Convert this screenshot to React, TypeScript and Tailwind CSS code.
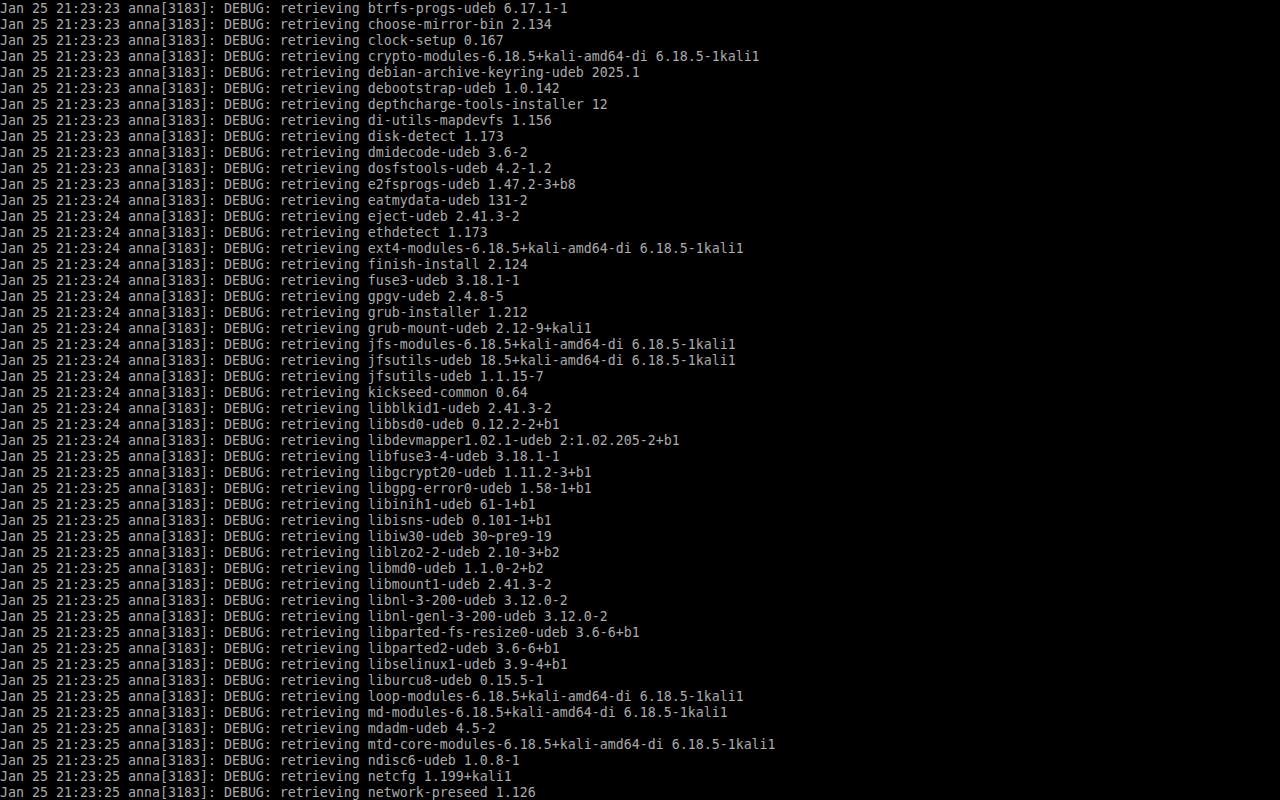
const stamps: [string, string][] = [
  ["23", "btrfs-progs-udeb 6.17.1-1"],
  ["23", "choose-mirror-bin 2.134"],
  ["23", "clock-setup 0.167"],
  ["23", "crypto-modules-6.18.5+kali-amd64-di 6.18.5-1kali1"],
  ["23", "debian-archive-keyring-udeb 2025.1"],
  ["23", "debootstrap-udeb 1.0.142"],
  ["23", "depthcharge-tools-installer 12"],
  ["23", "di-utils-mapdevfs 1.156"],
  ["23", "disk-detect 1.173"],
  ["23", "dmidecode-udeb 3.6-2"],
  ["23", "dosfstools-udeb 4.2-1.2"],
  ["23", "e2fsprogs-udeb 1.47.2-3+b8"],
  ["24", "eatmydata-udeb 131-2"],
  ["24", "eject-udeb 2.41.3-2"],
  ["24", "ethdetect 1.173"],
  ["24", "ext4-modules-6.18.5+kali-amd64-di 6.18.5-1kali1"],
  ["24", "finish-install 2.124"],
  ["24", "fuse3-udeb 3.18.1-1"],
  ["24", "gpgv-udeb 2.4.8-5"],
  ["24", "grub-installer 1.212"],
  ["24", "grub-mount-udeb 2.12-9+kali1"],
  ["24", "jfs-modules-6.18.5+kali-amd64-di 6.18.5-1kali1"],
  ["24", "jfsutils-udeb 18.5+kali-amd64-di 6.18.5-1kali1"],
  ["24", "jfsutils-udeb 1.1.15-7"],
  ["24", "kickseed-common 0.64"],
  ["24", "libblkid1-udeb 2.41.3-2"],
  ["24", "libbsd0-udeb 0.12.2-2+b1"],
  ["24", "libdevmapper1.02.1-udeb 2:1.02.205-2+b1"],
  ["25", "libfuse3-4-udeb 3.18.1-1"],
  ["25", "libgcrypt20-udeb 1.11.2-3+b1"],
  ["25", "libgpg-error0-udeb 1.58-1+b1"],
  ["25", "libinih1-udeb 61-1+b1"],
  ["25", "libisns-udeb 0.101-1+b1"],
  ["25", "libiw30-udeb 30~pre9-19"],
  ["25", "liblzo2-2-udeb 2.10-3+b2"],
  ["25", "libmd0-udeb 1.1.0-2+b2"],
  ["25", "libmount1-udeb 2.41.3-2"],
  ["25", "libnl-3-200-udeb 3.12.0-2"],
  ["25", "libnl-genl-3-200-udeb 3.12.0-2"],
  ["25", "libparted-fs-resize0-udeb 3.6-6+b1"],
  ["25", "libparted2-udeb 3.6-6+b1"],
  ["25", "libselinux1-udeb 3.9-4+b1"],
  ["25", "liburcu8-udeb 0.15.5-1"],
  ["25", "loop-modules-6.18.5+kali-amd64-di 6.18.5-1kali1"],
  ["25", "md-modules-6.18.5+kali-amd64-di 6.18.5-1kali1"],
  ["25", "mdadm-udeb 4.5-2"],
  ["25", "mtd-core-modules-6.18.5+kali-amd64-di 6.18.5-1kali1"],
  ["25", "ndisc6-udeb 1.0.8-1"],
  ["25", "netcfg 1.199+kali1"],
  ["25", "network-preseed 1.126"],
];

const App = () => {
  return (
    <div className="w-[1280px] h-[800px] overflow-hidden bg-black pt-px text-[#aaaaaa] font-['DejaVu_Sans_Mono',monospace] text-[13.29px] leading-4">
      {stamps.map(([sec, pkg], i) => (
        <div key={i} className="h-4 whitespace-pre">
          {`Jan 25 21:23:${sec} anna[3183]: DEBUG: retrieving ${pkg}`}
        </div>
      ))}
    </div>
  );
};

export default App;
